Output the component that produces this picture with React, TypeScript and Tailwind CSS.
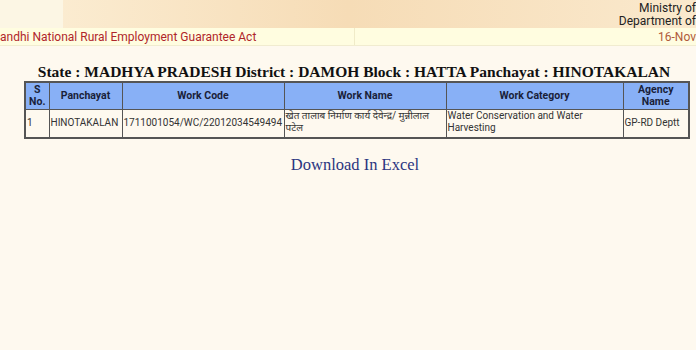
export default function App() {
  const th = "border border-[#555] font-bold text-[10.5px] leading-[12px] text-[#1a1f3a] px-[2px] text-center";
  const td = "border border-[#555] text-[10px] leading-[12px] text-[#333] px-[1px] align-middle";
  return (
    <div className="w-[696px] h-[350px] overflow-hidden bg-[#fef9ef]" style={{ fontFamily: "Roboto, sans-serif" }}>
      <div className="flex h-[28px] bg-gradient-to-r from-[#fcefd6] via-[#f6dcb6] to-[#fae9cd]">
        <div className="w-[63px] bg-[#fcf6e4]" />
        <div className="flex-1 flex flex-col items-end justify-center text-[12px] leading-[13px] text-[#222] pt-[2px]">
          <div className="whitespace-nowrap">Ministry of</div>
          <div className="whitespace-nowrap">Department of</div>
        </div>
      </div>
      <div className="flex h-[18px] bg-[#fffde0] border-b border-[#f1ecd0]">
        <div className="w-[355px] border-r border-[#f0ebc8] text-[12px] leading-[18px] text-[#b0262a] whitespace-nowrap overflow-hidden">
          andhi National Rural Employment Guarantee Act
        </div>
        <div className="flex-1 text-right text-[12px] leading-[18px] text-[#b05a3a] whitespace-nowrap">16-Nov</div>
      </div>
      <div className="pt-[17px] pl-[12px] text-center font-bold text-[15.5px] leading-[18px] text-[#111] whitespace-nowrap" style={{ fontFamily: '"Liberation Serif", serif' }}>
        State : MADHYA PRADESH District : DAMOH Block : HATTA Panchayat : HINOTAKALAN
      </div>
      <div className="pl-[24px]">
        <table className="border-collapse table-fixed border-2 border-[#555] w-[664px]">
          <colgroup>
            <col className="w-[24px]" />
            <col className="w-[73px]" />
            <col className="w-[162px]" />
            <col className="w-[162px]" />
            <col className="w-[177px]" />
            <col className="w-[66px]" />
          </colgroup>
          <thead>
            <tr className="bg-[#88b0f6] h-[27px]">
              <th className={th}>S<br />No.</th>
              <th className={th}>Panchayat</th>
              <th className={th}>Work Code</th>
              <th className={th}>Work Name</th>
              <th className={th}>Work Category</th>
              <th className={th}>Agency<br />Name</th>
            </tr>
          </thead>
          <tbody>
            <tr className="h-[29px]">
              <td className={td}>1</td>
              <td className={td + " whitespace-nowrap"}>HINOTAKALAN</td>
              <td className={td + " whitespace-nowrap"}>1711001054/WC/22012034549494</td>
              <td className={td + " align-top"} style={{ fontFamily: 'Roboto, "Noto Sans Devanagari", "Lohit Devanagari", sans-serif' }}>खेत तालाब निर्माण कार्य देवेन्द्र/ मुन्नीलाल पटेल</td>
              <td className={td + " align-top"}>Water Conservation and Water Harvesting</td>
              <td className={td + " whitespace-nowrap"}>GP-RD Deptt</td>
            </tr>
          </tbody>
        </table>
      </div>
      <div className="pt-[17px] pl-[14px] text-center text-[16.5px] leading-[18px] text-[#2b3580]" style={{ fontFamily: '"Liberation Serif", serif' }}>
        Download In Excel
      </div>
    </div>
  );
}
